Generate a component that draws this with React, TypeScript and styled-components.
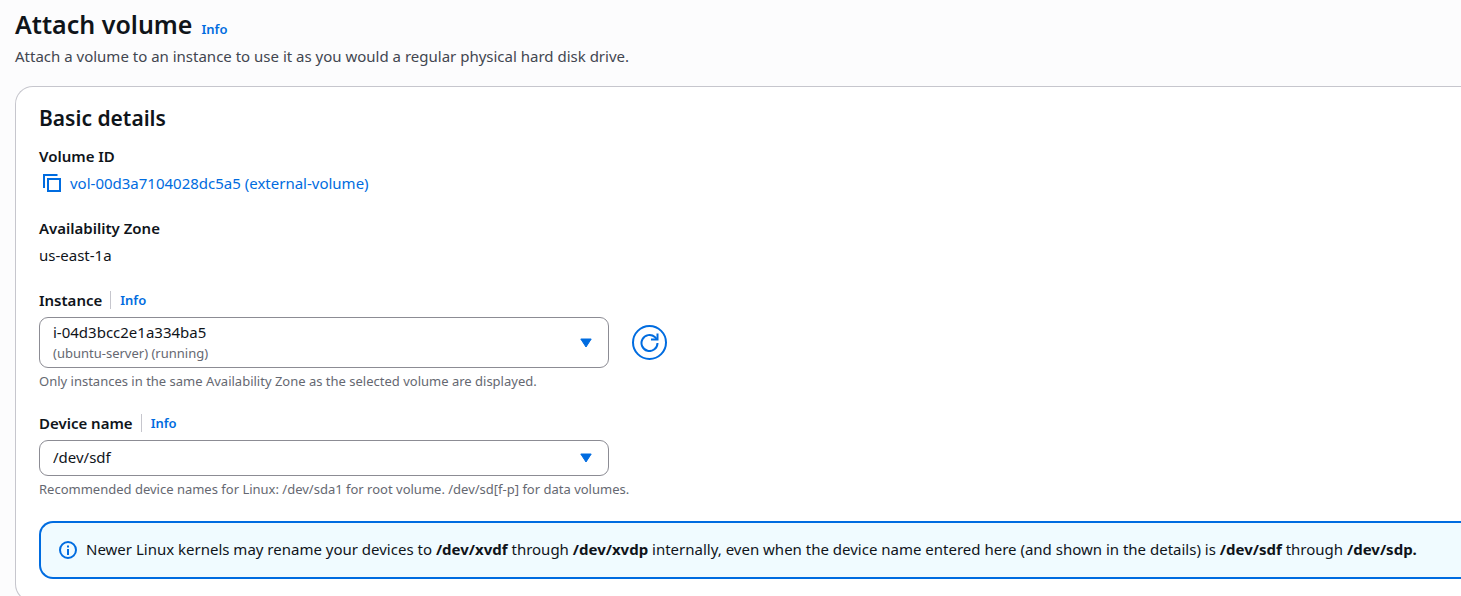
import React from "react";
import styled, { createGlobalStyle } from "styled-components";

const blue = "#006ce0";
const ink = "#0f141a";
const muted = "#656871";

const GlobalStyle = createGlobalStyle`
  *, *::before, *::after { box-sizing: border-box; }
  body {
    margin: 0;
    background: #fcfcfd;
    color: ${ink};
    font-family: "Noto Sans", "Open Sans", sans-serif;
    font-size: 15px;
    line-height: 22px;
  }
`;

const Page = styled.main`
  height: 100vh;
  overflow: hidden;
  padding: 7px 0 0 15px;
`;

const PageHeader = styled.header`
  margin-bottom: 19px;
`;

const TitleRow = styled.div`
  display: flex;
  align-items: baseline;
  gap: 9px;
`;

const Title = styled.h1`
  margin: 0;
  font-size: 25px;
  line-height: 34px;
  font-weight: 600;
`;

const Description = styled.p`
  margin: 4px 0 0;
  color: #424650;
`;

const InfoLink = styled.a`
  color: ${blue};
  font-size: 13px;
  font-weight: 600;
  text-decoration: none;
`;

const Card = styled.section`
  display: flex;
  flex-direction: column;
  gap: 23px;
  padding: 17px 0 22px 23px;
  background: #ffffff;
  border: 1px solid #c6c6cd;
  border-right: 0;
  border-radius: 18px 0 0 18px;
`;

const CardTitle = styled.h2`
  margin: 0 0 -10px;
  font-size: 21px;
  line-height: 28px;
  font-weight: 600;
`;

const Details = styled.dl`
  display: flex;
  flex-direction: column;
  gap: 23px;
  margin: 0;
`;

const Fields = styled.div`
  display: flex;
  flex-direction: column;
  gap: 22px;
`;

const Term = styled.dt`
  font-weight: 600;
`;

const Value = styled.dd`
  display: flex;
  align-items: center;
  gap: 9px;
  margin: 5px 0 0;
`;

const VolumeLink = styled.a`
  color: ${blue};
  text-decoration: none;
`;

const CopyButton = styled.button`
  display: flex;
  margin: 0 0 0 4px;
  padding: 0;
  border: 0;
  background: none;
  color: ${blue};
`;

const LabelRow = styled.div`
  display: flex;
  align-items: center;
  margin-bottom: 6px;
`;

const Label = styled.label`
  padding-right: 8px;
  font-weight: 600;
`;

const LabelInfo = styled.span`
  display: flex;
  align-items: center;
  height: 18px;
  padding-left: 9px;
  border-left: 1px solid #c6c6cd;
`;

const ControlRow = styled.div`
  display: flex;
  align-items: center;
  gap: 23px;
`;

const SelectBox = styled.div`
  position: relative;
  width: 100%;
  max-width: 570px;
`;

const Select = styled.select<{ $tall?: boolean }>`
  display: block;
  width: 100%;
  height: ${(p) => (p.$tall ? 51 : 36)}px;
  padding: ${(p) => (p.$tall ? "2px 40px 24px 13px" : "0 40px 2px 13px")};
  appearance: none;
  border: 1px solid #8c8c94;
  border-radius: 9px;
  background: #ffffff;
  color: ${ink};
  font: inherit;
`;

const SelectDetail = styled.span`
  position: absolute;
  left: 14px;
  bottom: 6px;
  color: ${muted};
  font-size: 13px;
  line-height: 18px;
  pointer-events: none;
`;

const Caret = styled.svg`
  position: absolute;
  right: 17px;
  top: 50%;
  margin-top: -5px;
  pointer-events: none;
`;

const RefreshButton = styled.button`
  display: flex;
  flex: none;
  align-items: center;
  justify-content: center;
  width: 35px;
  height: 35px;
  padding: 0;
  border: 2px solid ${blue};
  border-radius: 50%;
  background: #ffffff;
  color: ${blue};
`;

const Hint = styled.p`
  margin: 4px 0 0;
  color: ${muted};
  font-size: 13px;
  line-height: 18px;
`;

const Alert = styled.div`
  display: flex;
  align-items: center;
  gap: 9px;
  min-height: 58px;
  padding: 0 0 0 18px;
  border: 2px solid ${blue};
  border-right: 0;
  border-radius: 14px 0 0 14px;
  background: #f0fbff;
`;

const AlertText = styled.p`
  margin: 0;
  padding-bottom: 2px;
  white-space: nowrap;
`;

const CaretIcon = () => (
  <Caret width="12" height="10" viewBox="0 0 12 10" aria-hidden="true">
    <path d="M.8 1h10.400L6 9z" fill={blue} stroke={blue} strokeLinejoin="round" />
  </Caret>
);

const CopyIcon = () => (
  <svg width="18" height="18" viewBox="0 0 18 18" fill="none" stroke="currentColor" strokeWidth="2" aria-hidden="true">
    <path d="M1 14V1h13.500" />
    <path d="M5 5h12v12H5z" />
  </svg>
);

const RefreshIcon = () => (
  <svg width="19" height="19" viewBox="0 0 19 19" fill="none" stroke="currentColor" strokeWidth="2" aria-hidden="true">
    <path d="M17.500 10a8 8 0 1 1-2.600-5.900L17 6.200" />
    <path d="M17.500 .5v6H11" />
  </svg>
);

const InfoIcon = () => (
  <svg width="18" height="18" viewBox="0 0 18 18" fill="none" stroke={blue} strokeWidth="2" aria-hidden="true">
    <circle cx="9" cy="9" r="8" />
    <path d="M9 8v6M9 4.500v2" />
  </svg>
);

export default function App() {
  return (
    <>
      <GlobalStyle />
      <Page>
        <PageHeader>
          <TitleRow>
            <Title>Attach volume</Title>
            <InfoLink href="#info">Info</InfoLink>
          </TitleRow>
          <Description>
            Attach a volume to an instance to use it as you would a regular physical hard disk drive.
          </Description>
        </PageHeader>
        <Card>
          <CardTitle>Basic details</CardTitle>
          <Details>
            <div>
              <Term>Volume ID</Term>
              <Value>
                <CopyButton type="button" aria-label="Copy volume ID">
                  <CopyIcon />
                </CopyButton>
                <VolumeLink href="#volume">vol-00d3a7104028dc5a5 (external-volume)</VolumeLink>
              </Value>
            </div>
            <div>
              <Term>Availability Zone</Term>
              <Value>us-east-1a</Value>
            </div>
          </Details>
          <Fields>
            <div>
              <LabelRow>
                <Label htmlFor="instance">Instance</Label>
                <LabelInfo>
                  <InfoLink href="#instance-info">Info</InfoLink>
                </LabelInfo>
              </LabelRow>
              <ControlRow>
                <SelectBox>
                  <Select id="instance" $tall aria-describedby="instance-detail instance-hint">
                    <option>i-04d3bcc2e1a334ba5</option>
                  </Select>
                  <SelectDetail id="instance-detail">(ubuntu-server) (running)</SelectDetail>
                  <CaretIcon />
                </SelectBox>
                <RefreshButton type="button" aria-label="Refresh instances">
                  <RefreshIcon />
                </RefreshButton>
              </ControlRow>
              <Hint id="instance-hint">
                Only instances in the same Availability Zone as the selected volume are displayed.
              </Hint>
            </div>
            <div>
              <LabelRow>
                <Label htmlFor="device">Device name</Label>
                <LabelInfo>
                  <InfoLink href="#device-info">Info</InfoLink>
                </LabelInfo>
              </LabelRow>
              <SelectBox>
                <Select id="device" aria-describedby="device-hint">
                  <option>/dev/sdf</option>
                </Select>
                <CaretIcon />
              </SelectBox>
              <Hint id="device-hint">
                Recommended device names for Linux: /dev/sda1 for root volume. /dev/sd[f-p] for data volumes.
              </Hint>
            </div>
          </Fields>
          <Alert role="status">
            <InfoIcon />
            <AlertText>
              Newer Linux kernels may rename your devices to <b>/dev/xvdf</b> through <b>/dev/xvdp</b> internally, even
              when the device name entered here (and shown in the details) is <b>/dev/sdf</b> through <b>/dev/sdp.</b>
            </AlertText>
          </Alert>
        </Card>
      </Page>
    </>
  );
}
